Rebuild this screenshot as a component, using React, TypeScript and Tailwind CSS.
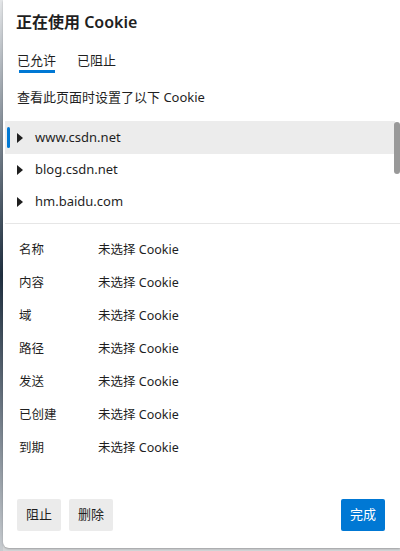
const font = { fontFamily: '"Segoe UI", "Noto Sans", "Noto Sans CJK SC", sans-serif' }

const sites = ['www.csdn.net', 'blog.csdn.net', 'hm.baidu.com']
const fields = ['名称', '内容', '域', '路径', '发送', '已创建', '到期']

function Caret() {
    return (
        <svg width="6" height="10" viewBox="0 0 6 10" className="shrink-0">
            <path d="M0 0 L6 5 L0 10 Z" fill="#1f1f1f" />
        </svg>
    )
}

export default function App() {
    return (
        <div className="flex h-[551px] w-[400px] overflow-hidden bg-[#d4d6d8]" style={font}>
            <div className="w-[3px] shrink-0 bg-gradient-to-b from-[#e4e6e8] via-[#203040] to-[#c8ccd0]" />
            <div className="flex h-[548px] flex-1 flex-col rounded-bl-[6px] bg-white text-[#1f1f1f] shadow-[0_1px_2px_rgba(0,0,0,0.25)]">
                <h1 className="pl-[13px] pt-[11px] text-[16px] font-semibold leading-[22px]">正在使用 Cookie</h1>

                <div className="mt-[19px] flex gap-[21px] pl-[14px] text-[13px]">
                    <div className="flex flex-col items-center">
                        <span className="leading-[16px]">已允许</span>
                        <div className="mt-[2px] h-[3px] w-[36px] bg-[#0078d4]" />
                    </div>
                    <span className="leading-[16px]">已阻止</span>
                </div>

                <p className="mt-[15px] pl-[14px] text-[13px] leading-[18px]">查看此页面时设置了以下 Cookie</p>

                <div className="relative mt-[15px] ml-[2px] border-b border-[#e6e6e6] pb-[5px]">
                    {sites.map((s, i) => (
                        <div
                            key={s}
                            className={`relative flex h-[32px] items-center gap-[12px] pl-[12px] text-[13px] ${i === 0 ? 'mr-[5px] h-[33px] bg-[#ececec]' : ''}`}
                        >
                            {i === 0 && <div className="absolute left-[2px] top-[6px] h-[21px] w-[3px] rounded-full bg-[#0078d4]" />}
                            <Caret />
                            <span>{s}</span>
                        </div>
                    ))}
                    <div className="absolute right-[0px] top-[1px] h-[52px] w-[6px] rounded-[3px] bg-[#999999]" />
                </div>

                <div className="mt-[10px] flex flex-col pl-[16px] text-[12.5px]">
                    {fields.map((f) => (
                        <div key={f} className="flex h-[33px] items-center">
                            <span className="w-[79px]">{f}</span>
                            <span>未选择 Cookie</span>
                        </div>
                    ))}
                </div>

                <div className="mt-auto mb-[17px] flex items-center pl-[14px] pr-[15px] text-[13px]">
                    <button className="h-[32px] w-[44px] rounded-[2px] bg-[#ebebeb]">阻止</button>
                    <button className="ml-[8px] h-[32px] w-[44px] rounded-[2px] bg-[#ebebeb]">删除</button>
                    <button className="ml-auto h-[32px] w-[44px] rounded-[2px] bg-[#0078d4] text-white">完成</button>
                </div>
            </div>
        </div>
    )
}
